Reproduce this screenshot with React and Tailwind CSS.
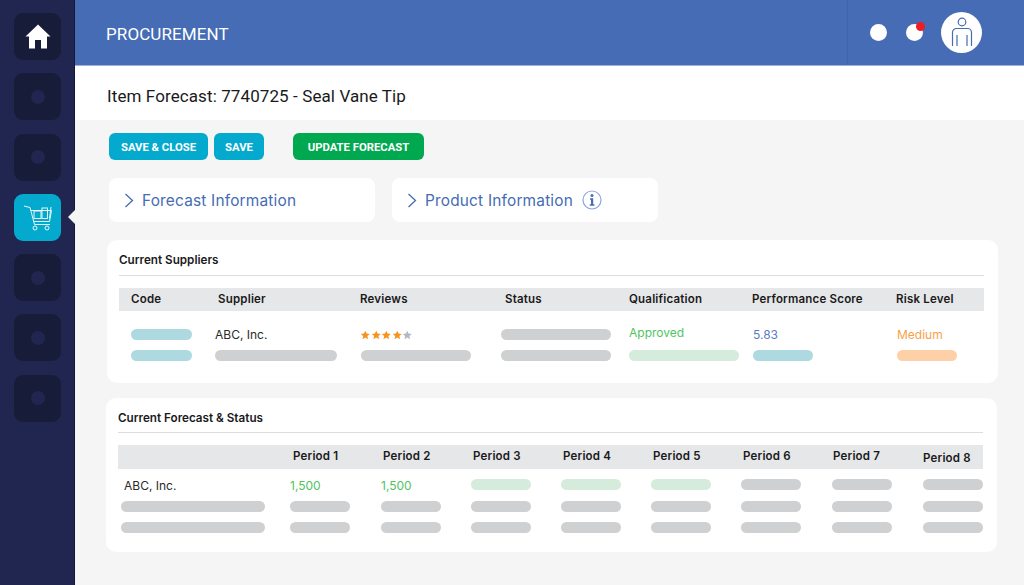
import React from 'react';

const Bar = ({ w, color = 'bg-[#cfd0d2]' }) => (
  <div className={`h-[11px] rounded-full ${color}`} style={{ width: w }} />
);

const CellText = ({ className = '', children }) => (
  <div className={`h-[11px] flex items-center whitespace-nowrap text-[12px] ${className}`}>{children}</div>
);

const Star = ({ color }) => (
  <svg width="10.5" height="10" viewBox="0 0 24 24" fill={color}>
    <path d="M12 1.500l3.200 7 7.600.8-5.700 5.100 1.600 7.600L12 18.200 5.300 22l1.600-7.600L1.200 9.300l7.600-.8z" />
  </svg>
);

const HomeIcon = () => (
  <svg width="26" height="25" viewBox="0 0 26 25" fill="white">
    <path d="M13 .5L25.500 12.500H22V24.500H16V16H10V24.500H4V12.500H.5z" />
  </svg>
);

const CartIcon = () => (
  <svg width="30" height="28" viewBox="0 0 30 28" fill="none" stroke="white" strokeWidth="0.9">
    <path d="M1 3l6 1.500 4.500 17H27" />
    <path d="M8 7.500h20.500l-2 11H11" />
    <rect x="11" y="8" width="7" height="7.500" />
    <rect x="19" y="5" width="5.500" height="10.500" />
    <path d="M28 4l-1.500 11.500" />
    <circle cx="12" cy="25" r="2" />
    <circle cx="24" cy="25" r="2" />
  </svg>
);

const PersonIcon = () => (
  <svg width="22" height="30" viewBox="0 0 22 30" fill="none" stroke="#456cb4" strokeWidth="1.200">
    <circle cx="11" cy="5" r="3.800" />
    <path d="M1.500 29V15.500a4 4 0 0 1 4-4h11a4 4 0 0 1 4 4V29" />
    <path d="M6 18v11M16 18v11" />
  </svg>
);

const InfoIcon = () => (
  <svg width="20" height="20" viewBox="0 0 20 20">
    <circle cx="10" cy="10" r="9" fill="none" stroke="#8ea6d8" strokeWidth="1.200" />
    <circle cx="10" cy="5.600" r="1.500" fill="#456cb4" />
    <path d="M8 8.300h3.200v6h1.200v1.500H7.800v-1.500H9v-4.500H8z" fill="#456cb4" />
  </svg>
);

const Chevron = () => (
  <svg width="10" height="15" viewBox="0 0 10 15" fill="none" stroke="#456cb4" strokeWidth="1.300">
    <path d="M1.500 1l7 6.500-7 6.500" />
  </svg>
);

const SideTile = ({ active, children }) => (
  <div className={`relative w-[47px] h-[47px] rounded-[9px] flex items-center justify-center ${active ? 'bg-[#04a9ce]' : 'bg-[#171c38]'}`}>
    {children || <div className="w-[14px] h-[14px] rounded-full bg-[#20264f]" />}
    {active && (
      <div className="absolute left-[54px] top-[16px] w-0 h-0 border-y-[7px] border-y-transparent border-r-[7px] border-r-[#f5f5f5]" />
    )}
  </div>
);

const Sidebar = () => (
  <aside className="w-[75px] shrink-0 bg-[#20264f] border-r border-r-[#14183c] pl-[14px] pt-[13px] flex flex-col gap-[13.300px]">
    <SideTile><HomeIcon /></SideTile>
    <SideTile />
    <SideTile />
    <SideTile active><CartIcon /></SideTile>
    <SideTile />
    <SideTile />
    <SideTile />
  </aside>
);

const Accordion = ({ label, info }) => (
  <div className="w-[266px] h-[44px] bg-white rounded-[8px] pl-[15px] flex items-center text-[#456cb4] text-[15.400px] tracking-[0.2px]">
    <Chevron />
    <span className="ml-[8px] pt-[1px]">{label}</span>
    {info && <span className="ml-[9px] flex"><InfoIcon /></span>}
  </div>
);

const Btn = ({ color, w, children }) => (
  <button className={`h-[27px] pt-[3px] rounded-[6px] text-white text-[11.300px] font-bold font-['Roboto',sans-serif] ${color}`} style={{ width: w }}>
    {children}
  </button>
);

const supplierHeads = [
  ['Code', ''],
  ['Supplier', 'pl-[3px]'],
  ['Reviews', ''],
  ['Status', 'pl-[4px]'],
  ['Qualification', ''],
  ['Performance Score', ''],
  ['Risk Level', ''],
];

const SuppliersCard = () => (
  <section className="w-[891px] h-[143px] bg-white rounded-[10px] pl-[12px] pr-[14px]">
    <h3 className="h-[36px] border-b border-b-[#dcdde3] pt-[12px] text-[11.700px] leading-[16px] font-semibold text-[#1a1a1a]">Current Suppliers</h3>
    <div className="mt-[12px] h-[23px] pl-[12px] bg-[#e6e7e9] grid grid-cols-[84px_145px_141px_128px_123px_144px_1fr] items-center text-[11.500px] tracking-[0.2px] font-semibold text-[#1a1a1a]">
      {supplierHeads.map(([h, cls]) => <div key={h} className={`whitespace-nowrap ${cls}`}>{h}</div>)}
    </div>
    <div className="mt-[18px] pl-[12px] grid grid-cols-[84px_145px_141px_128px_123px_144px_1fr] gap-y-[10px]">
      <Bar w={61} color="bg-[#aed9e0]" />
      <CellText className="text-[#2a2a2a] text-[12px]">ABC, Inc.</CellText>
      <div className="h-[11px] flex items-center"><Star color="#f7941d" /><Star color="#f7941d" /><Star color="#f7941d" /><Star color="#f7941d" /><Star color="#b5b7c4" /></div>
      <Bar w={110} />
      <CellText className="text-[#4fc45f] -mt-[2px]">Approved</CellText>
      <CellText className="text-[#5b7cc4] text-[12.500px] pl-[1px]">5.83</CellText>
      <CellText className="text-[#f8a14a] pl-[1px]">Medium</CellText>

      <Bar w={61} color="bg-[#aed9e0]" />
      <Bar w={122} />
      <div className="pl-[1px]"><Bar w={110} /></div>
      <Bar w={110} />
      <Bar w={110} color="bg-[#d5ebdc]" />
      <div className="pl-[1px]"><Bar w={60} color="bg-[#aed9e0]" /></div>
      <div className="pl-[1px]"><Bar w={60} color="bg-[#fdd0a8]" /></div>
    </div>
  </section>
);

const periods = [1, 2, 3, 4, 5, 6, 7, 8];
const forecastCols = 'grid grid-cols-[169px_91px_90px_90px_90px_90px_91px_91px_60px] pl-[3px]';

const ForecastCard = () => (
  <section className="w-[891px] h-[154px] -ml-[1px] mt-[15px] bg-white rounded-[10px] pl-[12px] pr-[14px]">
    <h3 className="h-[35px] border-b border-b-[#dddddf] pt-[12px] text-[11.700px] leading-[16px] font-semibold text-[#1a1a1a]">Current Forecast &amp; Status</h3>
    <div className="mt-[12px] h-[24px] bg-[#e6e7e9] grid grid-cols-[175px_repeat(8,90px)] items-center text-[11.500px] tracking-[0.2px] font-semibold text-[#1a1a1a]">
      <div />
      {periods.map((p) => (
        <div key={p} className={`whitespace-nowrap ${p === 8 ? 'mt-[3px]' : ''}`}>Period {p}</div>
      ))}
    </div>
    <div className={`mt-[10px] ${forecastCols}`}>
      <CellText className="text-[#2a2a2a] pl-[3px] pt-[2px]">ABC, Inc.</CellText>
      <CellText className="text-[#4fc45f] text-[12.500px] pt-[2px]">1,500</CellText>
      <CellText className="text-[#4fc45f] text-[12.500px] pt-[2px]">1,500</CellText>
      <Bar w={60} color="bg-[#d5ebdc]" />
      <Bar w={60} color="bg-[#d5ebdc]" />
      <Bar w={60} color="bg-[#d5ebdc]" />
      <Bar w={60} />
      <Bar w={60} />
      <Bar w={60} />
    </div>
    {[0, 1].map((r) => (
      <div key={r} className={`mt-[10.500px] ${forecastCols}`}>
        <Bar w={144} />
        {periods.map((p) => <Bar key={p} w={60} />)}
      </div>
    ))}
  </section>
);

export default function App() {
  return (
    <div className="w-[1024px] h-[585px] overflow-hidden flex bg-[#f5f5f5] font-['Inter',sans-serif]">
      <Sidebar />
      <main className="flex-1 flex flex-col min-w-0">
        {/* Top bar */}
        <header className="h-[66px] shrink-0 bg-[#456cb4] border-b border-b-[#9db3dc] flex items-center pl-[31px] font-['Roboto',sans-serif]">
          <span className="text-white text-[17px] tracking-[0.1px] pt-[4px]">PROCUREMENT</span>
          <div className="ml-auto h-full w-[177px] border-l border-l-[#3f64a9] flex items-center pl-[22px] -mt-[1px]">
            <div className="w-[17px] h-[17px] rounded-full bg-white" />
            <div className="relative ml-[19px] w-[17px] h-[17px] rounded-full bg-white">
              <div className="absolute -top-[2px] left-[10px] w-[9px] h-[9px] rounded-full bg-[#ee1c25]" />
            </div>
            <div className="ml-[18px] w-[41px] h-[41px] rounded-full bg-white flex items-center justify-center"><PersonIcon /></div>
          </div>
        </header>

        {/* Page title */}
        <div className="h-[54px] shrink-0 bg-white pl-[32px] pt-[7px] flex items-center text-[17px] text-[#1a1a1a] font-['Roboto',sans-serif] tracking-[0.1px]">
          Item Forecast: 7740725 - Seal Vane Tip
        </div>

        <div className="pl-[32px] pt-[13px]">
          <div className="pl-[2px] flex">
            <Btn color="bg-[#04a9ce]" w={99}>SAVE &amp; CLOSE</Btn>
            <div className="w-[6px]" />
            <Btn color="bg-[#04a9ce]" w={50}>SAVE</Btn>
            <div className="w-[29px]" />
            <Btn color="bg-[#00a84f]" w={131}>UPDATE FORECAST</Btn>
          </div>

          <div className="mt-[18px] pl-[2px] flex gap-[17px]">
            <Accordion label="Forecast Information" />
            <Accordion label="Product Information" info />
          </div>

          <div className="mt-[18px]">
            <SuppliersCard />
            <ForecastCard />
          </div>
        </div>
      </main>
    </div>
  );
}
